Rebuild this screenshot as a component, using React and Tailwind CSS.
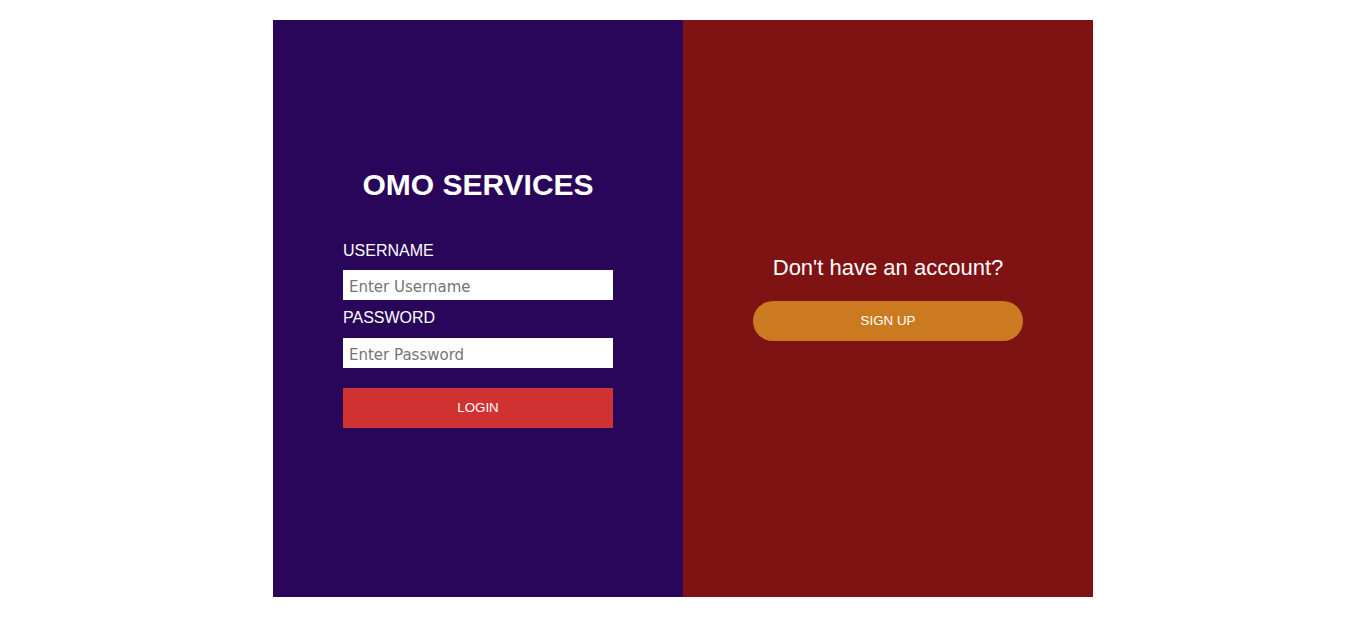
import { useState } from 'react';

export default function App() {
  const [username, setUsername] = useState('');
  const [password, setPassword] = useState('');

  return (
    <main className="min-h-screen bg-white pt-5 font-['Liberation_Sans',Arial,sans-serif]">
      <div className="mx-auto flex h-[577px] w-[820px]">
        {/* login side */}
        <section className="flex w-1/2 flex-col items-center justify-center bg-[#29065a] pb-[22px]">
          <h1 className="text-[30px] font-bold leading-[34px] text-white">OMO SERVICES</h1>
          <form
            onSubmit={(e) => e.preventDefault()}
            className="mt-10 flex w-[270px] flex-col"
          >
            <label className="block text-[16px] leading-[18px] text-white">USERNAME</label>
            <input
              type="text"
              value={username}
              onChange={(e) => setUsername(e.target.value)}
              placeholder="Enter Username"
              className="mt-[10px] h-[30px] w-full bg-white px-[6px] pt-[4px] font-['DejaVu_Sans',Verdana,sans-serif] text-[15px] text-black outline-none placeholder:text-[#757575]"
            />
            <label className="mt-[9px] block text-[16px] leading-[18px] text-white">PASSWORD</label>
            <input
              type="password"
              value={password}
              onChange={(e) => setPassword(e.target.value)}
              placeholder="Enter Password"
              className="mt-[11px] h-[30px] w-full bg-white px-[6px] pt-[4px] font-['DejaVu_Sans',Verdana,sans-serif] text-[15px] text-black outline-none placeholder:text-[#757575]"
            />
            <button
              type="submit"
              className="mt-5 h-10 w-full bg-[#d03131] text-[13.33px] text-white"
            >
              LOGIN
            </button>
          </form>
        </section>

        {/* sign up side */}
        <section className="flex w-1/2 flex-col items-center justify-center bg-[#7f1213] pb-[21px]">
          <p className="text-[22px] leading-[25px] text-white">Don't have an account?</p>
          <button
            type="button"
            className="mt-[21px] h-10 w-[270px] rounded-full bg-[#cc7a1f] text-[13.33px] text-white"
          >
            SIGN UP
          </button>
        </section>
      </div>
    </main>
  );
}
